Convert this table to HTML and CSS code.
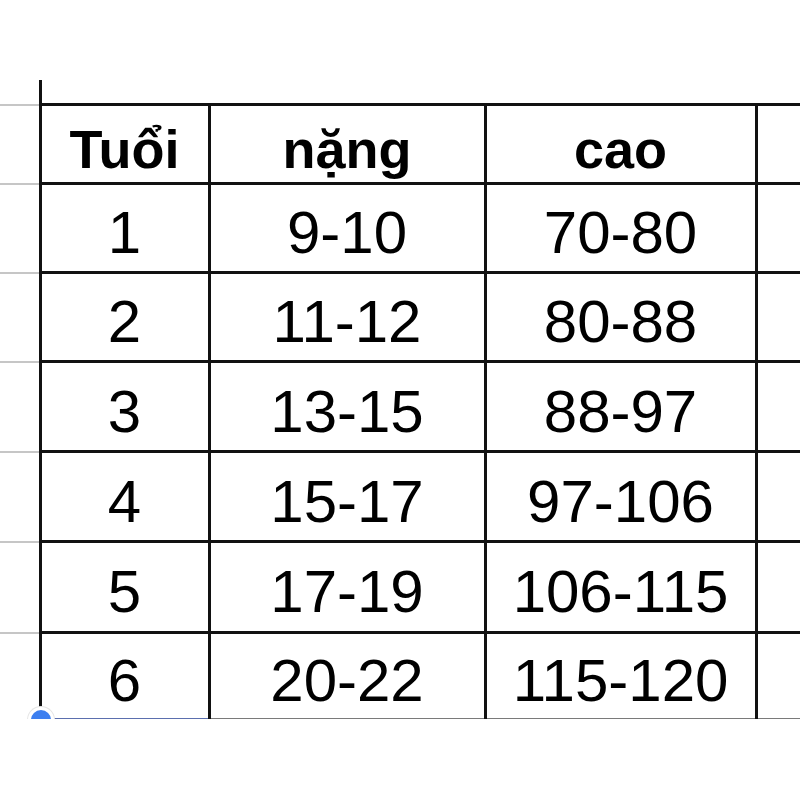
FILE: index.html
```html
<!DOCTYPE html>
<html lang="vi">
<head>
<meta charset="utf-8">
<title>Bảng cân nặng chiều cao</title>
<link rel="stylesheet" href="styles.css">
</head>
<body>
<div class="sheet">
  <table class="grid">
    <colgroup>
      <col class="k0">
      <col class="k1">
      <col class="k2">
      <col class="k3">
      <col class="k4">
    </colgroup>
    <tr class="spacer">
      <td class="gutter"></td>
      <td class="edge"></td>
      <td class="blank"></td>
      <td class="blank"></td>
      <td class="blank"></td>
    </tr>
    <tr class="head">
      <td class="gutter"></td>
      <td>Tuổi</td>
      <td>nặng</td>
      <td>cao</td>
      <td></td>
    </tr>
    <tr class="r1">
      <td class="gutter"></td>
      <td>1</td><td>9-10</td><td>70-80</td><td></td>
    </tr>
    <tr class="r2">
      <td class="gutter"></td>
      <td>2</td><td>11-12</td><td>80-88</td><td></td>
    </tr>
    <tr class="r3">
      <td class="gutter"></td>
      <td>3</td><td>13-15</td><td>88-97</td><td></td>
    </tr>
    <tr class="r4">
      <td class="gutter"></td>
      <td>4</td><td>15-17</td><td>97-106</td><td></td>
    </tr>
    <tr class="r5">
      <td class="gutter"></td>
      <td>5</td><td>17-19</td><td>106-115</td><td></td>
    </tr>
    <tr class="r6 last">
      <td class="gutter"></td>
      <td class="sel">6</td><td>20-22</td><td>115-120</td><td></td>
    </tr>
  </table>
  <span class="handle"></span>
</div>
</body>
</html>
```

FILE: styles.css
```css
html, body {
  margin: 0;
  padding: 0;
  background: #ffffff;
  overflow: hidden;
  width: 800px;
  height: 800px;
}

.sheet {
  position: relative;
  padding-top: 80px;
  width: 820px;
  height: 639px;
  overflow: hidden;
}

.grid {
  border-collapse: collapse;
  table-layout: fixed;
  font-family: "Liberation Sans", Arial, sans-serif;
  color: #000000;
  width: 820px;
}

.grid col.k0 { width: 40px; }
.grid col.k1 { width: 169px; }
.grid col.k2 { width: 276px; }
.grid col.k3 { width: 271px; }
.grid col.k4 { width: 64px; }

.grid td {
  border: 3px solid #111111;
  text-align: center;
  vertical-align: middle;
  font-size: 60px;
  line-height: 60px;
  padding: 10px 0 0 0;
  white-space: nowrap;
}

.grid td.gutter {
  border: none;
  border-bottom: 2px solid #c6c6c6;
  padding: 0;
}

.grid tr.spacer td {
  height: 23px;
  padding: 0;
  border-top: none;
  border-left: none;
  border-right: none;
}

.grid tr.spacer td.edge {
  border-left: 3px solid #111111;
}

.grid tr.spacer td.gutter {
  border-bottom: 2px solid #c6c6c6;
}

.grid tr.head td {
  height: 66px;
  font-weight: bold;
  font-size: 54px;
  line-height: 54px;
}

.grid tr.r1 td { height: 76px; }
.grid tr.r2 td { height: 76px; }
.grid tr.r3 td { height: 77px; }
.grid tr.r4 td { height: 77px; }
.grid tr.r5 td { height: 78px; }
.grid tr.r6 td { height: 74px; }

.grid tr.last td {
  border-bottom: 2px solid #7a7a7a;
}

.grid tr.last td.gutter {
  border-bottom: none;
}

.grid tr.last td.sel {
  border-bottom: 2px solid #5b6fae;
}

.handle {
  position: absolute;
  left: 28px;
  top: 707px;
  width: 20px;
  height: 20px;
  border-radius: 50%;
  background: #3d7ff0;
  border: 3px solid #ffffff;
  box-shadow: 0 0 0 1px #e6e6e6;
}
```
